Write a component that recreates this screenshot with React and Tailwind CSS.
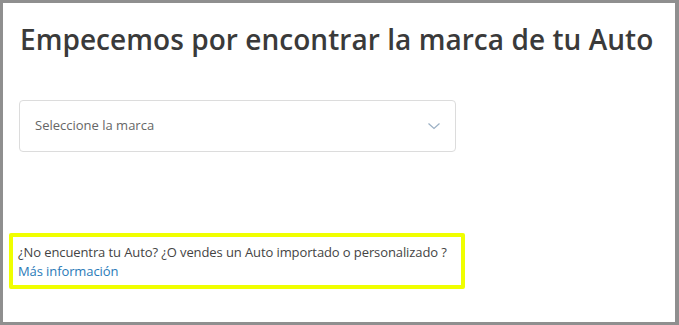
import React from 'react';

export default function App() {
  return (
    <div className="w-[679px] h-[325px] bg-[#8f8f8f] p-[3px] pr-[4px]" style={{ fontFamily: '"Open Sans", "Noto Sans", sans-serif' }}>
      <div className="h-full bg-white pl-[20px] pt-[16px]">
        <h1 className="ml-[-3px] text-[28px] leading-[40px] font-semibold text-[#3a3a3a] tracking-[0.05px]">
          Empecemos por encontrar la marca de tu Auto
        </h1>

        <div className="mt-[41px] w-[437px] h-[52px] ml-[-4px] border border-[#dcdcdc] rounded-[4px] flex items-center justify-between pl-[15px] pr-[14px]">
          <span className="text-[13px] text-[#666]">Seleccione la marca</span>
          <svg className="w-[14px] h-[14px] text-[#9bb0c4]" viewBox="0 0 14 14" fill="none" stroke="currentColor" strokeWidth="1.2" aria-hidden="true">
            <path d="M1.5 4.5 7 9.5l5.5-5" />
          </svg>
        </div>

        <div className="mt-[81px] ml-[-14px] w-[456px] border-[4px] border-[#f0ff00] rounded-[2px] px-[5px] pt-[6px] pb-[4px] text-[13px] tracking-[-0.1px] leading-[19px]">
          <p className="text-[#444]">¿No encuentra tu Auto? ¿O vendes un Auto importado o personalizado ?</p>
          <a href="#" className="text-[#2a7ab8]">Más información</a>
        </div>
      </div>
    </div>
  );
}
